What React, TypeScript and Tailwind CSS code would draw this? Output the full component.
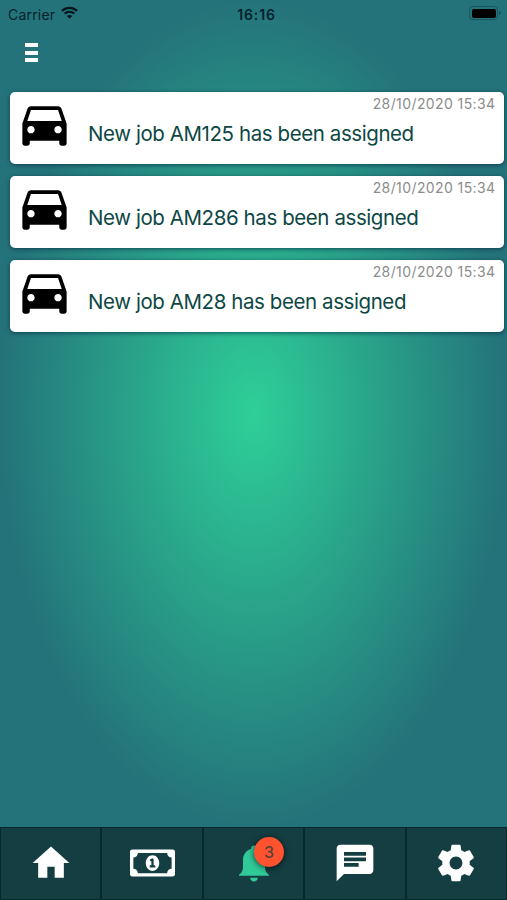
import React from "react";
import { FaRegMoneyBillAlt } from "react-icons/fa";
import { MdChat, MdDirectionsCar } from "react-icons/md";

const jobs = ["AM125", "AM286", "AM28"];

function StatusBar() {
  return (
    <div className="grid h-7 grid-cols-3 items-center pl-2 pr-[6px] text-[14px] text-[#04222c]">
      <div className="flex items-center gap-[6px]">
        <span className="tracking-[0.2px]">Carrier</span>
        <svg className="-mt-[3px] h-[13px] w-[17px]" viewBox="0 0 18 13" fill="none" stroke="#04161c" strokeWidth="2.5">
          <path d="M1 4.8C5.6.5 12.4.5 17 4.8" />
          <path d="M3.9 7.8c3-2.7 7.2-2.7 10.2 0" />
          <path d="M9 13 6.1 10.1c1.7-1.4 4.1-1.4 5.8 0z" fill="#04161c" stroke="none" />
        </svg>
      </div>
      <span className="-mr-[4px] text-center font-semibold tracking-[0.9px]">16:16</span>
      <div className="-mt-[2px] flex items-center justify-end gap-px">
        <div className="flex h-[14px] w-[29px] items-stretch rounded-[4px] border border-[#1b555d] p-[1.5px]">
          <div className="flex-1 rounded-[2px] bg-black" />
        </div>
        <div className="h-1 w-[1.5px] rounded-r bg-[#1b555d]" />
      </div>
    </div>
  );
}

function JobCard({ job }: { job: string }) {
  return (
    <div className="flex h-[71.5px] rounded-[5px] bg-white pl-[5.5px] pr-2 shadow-[0_1px_4px_rgba(0,30,60,0.65)]">
      <MdDirectionsCar className="mt-[1.5px] size-[59px] shrink-0 text-black" />
      <div className="flex flex-1 flex-col pl-[14px]">
        <div className="mt-1 self-end whitespace-nowrap text-[14px] leading-4 tracking-[0.4px] text-[#8c8c8c]">28/10/2020 15:34</div>
        <div className="mt-2 whitespace-nowrap text-[20.5px] leading-7 tracking-[-0.42px] text-[#0d4744]">New job {job} has been assigned</div>
      </div>
    </div>
  );
}

function Tab({ children }: { children: React.ReactNode }) {
  return <div className="flex flex-1 items-center justify-center bg-[#153e42] pb-[1.5px]">{children}</div>;
}

export default function App() {
  return (
    <div className="flex h-[900px] w-[507px] flex-col overflow-hidden bg-[#24737a] font-['Inter','Liberation_Sans',sans-serif]">
      <main className="flex-1 bg-[radial-gradient(253px_413px_at_50%_50%,#2ecf98_0%,#24737a_100%)]">
        <StatusBar />
        <div className="flex h-16 flex-col gap-[3.5px] pl-[25px] pt-[15px]">
          <div className="h-1 w-[13px] bg-white" />
          <div className="h-1 w-[13px] bg-white" />
          <div className="h-1 w-[13px] bg-white" />
        </div>
        <div className="flex flex-col gap-[12.7px] pl-[9.5px] pr-[3.5px]">
          {jobs.map((job) => (
            <JobCard key={job} job={job} />
          ))}
        </div>
      </main>
      <nav className="flex h-[73px] gap-[2px] border-x-[1.5px] border-b-[1.5px] border-t border-[#07282d] bg-[#07282d]">
        <Tab>
          <svg className="size-[44px] text-white" viewBox="0 0 24 24" fill="currentColor">
            <path d="M10 20v-6h4v6h5v-8h3L12 3 2 12h3v8z" />
          </svg>
        </Tab>
        <Tab>
          <FaRegMoneyBillAlt className="h-[36px] w-[45px] text-white" />
        </Tab>
        <Tab>
          <div className="relative size-[44px]">
            <svg className="size-[44px] text-[#30ca98]" viewBox="0 0 44 44" fill="currentColor">
              <path d="M22 4.5c-1.8 0-2.9 1.1-2.9 2.8v.8C14.300 9.400 11 13.500 11 19v5.500c0 5.500-1.200 7.200-4 9.300v1h30v-1c-2.800-2.100-4-3.800-4-9.300V19c0-5.500-3.300-9.600-8.100-10.900v-.8c0-1.700-1.100-2.800-2.900-2.800z" />
              <path d="M18.100 36.800h7.800c-.3 2.200-1.900 3.700-3.900 3.700s-3.600-1.500-3.900-3.700z" />
            </svg>
            <div className="absolute -top-[4px] left-[22.500px] flex size-[30px] items-center justify-center rounded-full bg-[#ff5330] text-[16px] font-medium text-[#544039] shadow-[0_1px_6px_rgba(0,0,0,0.7)]">3</div>
          </div>
        </Tab>
        <Tab>
          <MdChat className="size-[44px] text-white" />
        </Tab>
        <Tab>
          <svg className="size-[44px] text-white" viewBox="0 0 24 24" fill="currentColor">
            <path d="M19.43 12.98c.04-.32.07-.64.07-.98s-.03-.66-.07-.98l2.110-1.650c.19-.15.24-.42.12-.64l-2-3.460c-.12-.22-.39-.3-.61-.22l-2.490 1c-.52-.4-1.080-.73-1.690-.98l-.38-2.650C14.460 2.180 14.250 2 14 2h-4c-.25 0-.46.18-.49.42l-.38 2.650c-.61.25-1.170.59-1.690.98l-2.490-1c-.23-.09-.49 0-.61.22l-2 3.460c-.13.22-.07.49.12.64l2.110 1.650c-.04.32-.07.65-.07.98s.03.66.07.98l-2.110 1.650c-.19.15-.24.42-.12.64l2 3.460c.12.22.39.3.61.22l2.490-1c.52.4 1.080.73 1.690.98l.38 2.650c.03.24.24.42.49.42h4c.25 0 .46-.18.49-.42l.38-2.650c.61-.25 1.170-.59 1.690-.98l2.490 1c.23.09.49 0 .61-.22l2-3.460c.12-.22.07-.49-.12-.64l-2.110-1.650zM12 15.500c-1.930 0-3.500-1.570-3.500-3.500s1.570-3.500 3.500-3.500 3.500 1.570 3.500 3.500-1.570 3.500-3.500 3.500z" />
          </svg>
        </Tab>
      </nav>
    </div>
  );
}
